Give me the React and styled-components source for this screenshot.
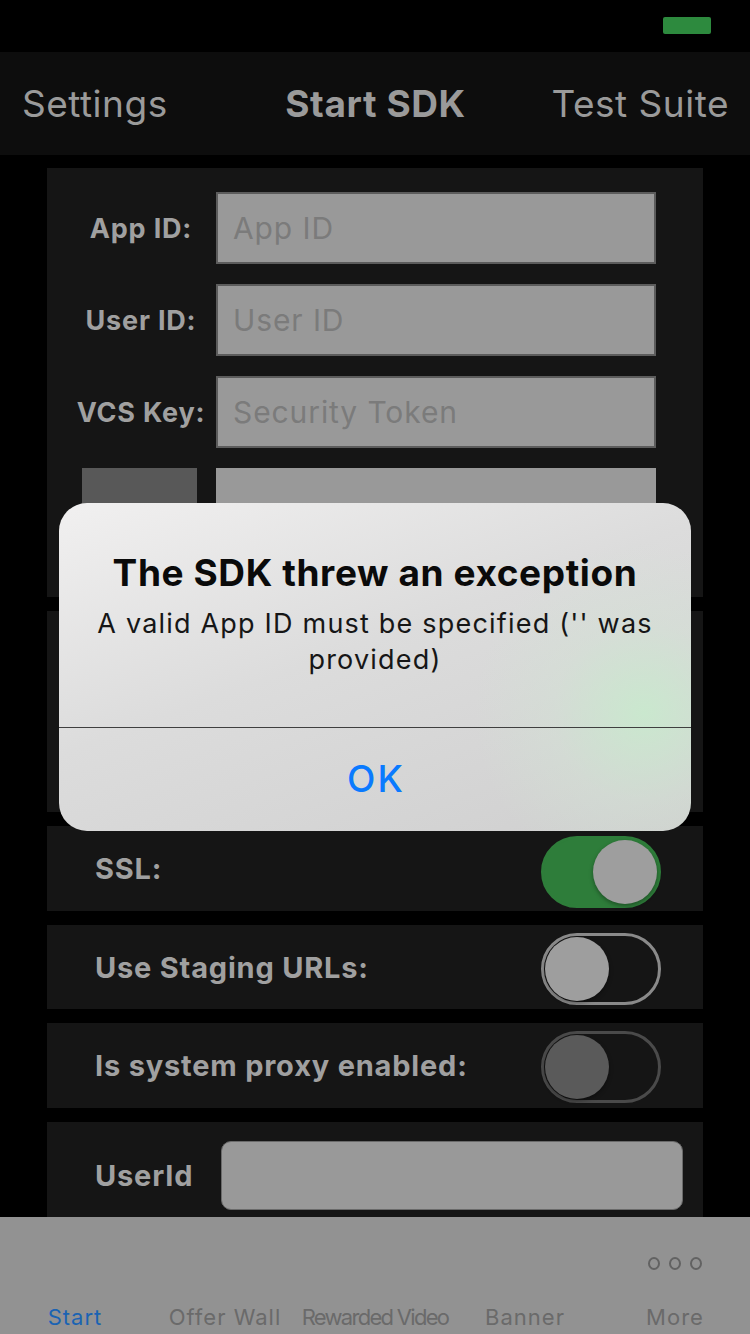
import React from "react";
import styled, { createGlobalStyle } from "styled-components";

const Global = createGlobalStyle`
  html, body { margin: 0; padding: 0; background: #000; }
  body { font-family: Inter, Roboto, "Noto Sans", sans-serif; }
  * { box-sizing: border-box; }
`;

const Page = styled.div`
  position: relative;
  width: 750px;
  height: 1334px;
  background: #000;
  display: flex;
  flex-direction: column;
  overflow: hidden;
`;

const StatusBar = styled.div`
  height: 52px;
  flex: none;
  display: flex;
  justify-content: flex-end;
  padding: 17px 39px 0 0;
`;

const Battery = styled.div`
  width: 48px;
  height: 17px;
  border-radius: 2px;
  background: #2d8a3e;
`;

const NavBar = styled.div`
  height: 103px;
  flex: none;
  background: #0d0d0d;
  display: grid;
  grid-template-columns: 1fr auto 1fr;
  align-items: center;
  padding: 0 21px 0 22px;
`;

const NavItem = styled.div`
  font-size: 37px;
  color: #9a9a9a;
  font-weight: ${(p) => (p.$bold ? 700 : 400)};
  letter-spacing: ${(p) => (p.$bold ? "0.6px" : "0.5px")};
  justify-self: ${(p) => p.$align || "center"};
`;

const Content = styled.div`
  flex: 1;
  min-height: 0;
  overflow: hidden;
  padding: 13px 47px 0;
  display: flex;
  flex-direction: column;
  gap: 14px;
`;

const Card = styled.div`
  flex: none;
  background: #151515;
  height: ${(p) => p.$h}px;
  padding: ${(p) => p.$pad || "0"};
  display: flex;
  flex-direction: ${(p) => (p.$col ? "column" : "row")};
  align-items: ${(p) => (p.$col ? "stretch" : p.$top ? "flex-start" : "center")};
  justify-content: ${(p) => (p.$col ? "flex-start" : "space-between")};
  gap: ${(p) => p.$gap || 0}px;
`;

const FieldRow = styled.div`
  display: flex;
  align-items: center;
  height: ${(p) => p.$h || 72}px;
  gap: 8px;
`;

const FieldLabel = styled.div`
  width: 140px;
  margin-left: 24px;
  margin-right: -3px;
  text-align: center;
  font-size: 27px;
  font-weight: 700;
  letter-spacing: 0.8px;
  color: #a0a0a0;
  white-space: nowrap;
`;

const TextBox = styled.div`
  width: 440px;
  height: 72px;
  background: #999;
  border: 2px solid #5c5c5c;
  display: flex;
  align-items: center;
  padding-left: 15px;
  font-size: 30px;
  letter-spacing: 0.9px;
  color: #7b7b7b;
`;

const DarkBlock = styled.div`
  width: 115px;
  height: 100%;
  margin-left: 35px;
  background: #585858;
`;

const LightBlock = styled.div`
  width: 440px;
  height: 100%;
  margin-left: 11px;
  background: #999;
`;

const RowLabel = styled.div`
  font-size: 29px;
  font-weight: 700;
  letter-spacing: 0.8px;
  color: #a0a0a0;
  padding-left: 48px;
  white-space: nowrap;
  line-height: ${(p) => p.$lh || "normal"};
`;

const Toggle = styled.div`
  position: relative;
  width: 120px;
  height: 72px;
  margin-right: 42px;
  margin-top: ${(p) => (p.$on ? 6 : 3)}px;
  border-radius: 36px;
  background: ${(p) => (p.$on ? "#2e7d3a" : "transparent")};
  border: 3px solid ${(p) => (p.$on ? "#2e7d3a" : p.$dim ? "#4a4a4a" : "#8a8a8a")};
`;

const Knob = styled.div`
  position: absolute;
  top: 1px;
  ${(p) => (p.$on ? "right: 1px;" : "left: 1px;")}
  width: 64px;
  height: 64px;
  border-radius: 50%;
  background: ${(p) => (p.$dim ? "#5a5a5a" : "#9e9e9e")};
  box-shadow: 0 2px 4px rgba(0, 0, 0, 0.35);
`;

const UserIdBox = styled.div`
  width: 462px;
  height: 69px;
  margin-right: 20px;
  border-radius: 10px;
  background: #999;
  border: 1px solid #6a6a6a;
`;

const TabBar = styled.div`
  height: 117px;
  flex: none;
  background: #929292;
  display: grid;
  grid-template-columns: repeat(5, 150px);
  align-items: end;
  padding-bottom: 4px;
`;

const Tab = styled.div`
  display: flex;
  flex-direction: column;
  align-items: center;
  gap: 34px;
`;

const TabLabel = styled.div`
  font-size: 22px;
  color: ${(p) => (p.$active ? "#1a63b3" : "#6a6a6a")};
  letter-spacing: ${(p) => (p.$tight ? "-1.7px" : "1px")};
  white-space: nowrap;
`;

const Dots = styled.div`
  display: flex;
  gap: 9px;
`;

const Dot = styled.div`
  width: 12px;
  height: 13px;
  border-radius: 50%;
  border: 2px solid #626262;
`;

const Overlay = styled.div`
  position: absolute;
  left: 59px;
  top: 503px;
  width: 632px;
  height: 328px;
  border-radius: 28px;
  overflow: hidden;
  background:
    radial-gradient(circle at 585px 210px, rgba(200, 235, 205, 0.85) 0, rgba(210, 228, 212, 0.4) 90px, rgba(210, 210, 210, 0) 170px),
    linear-gradient(160deg, #f1f0f0 0%, #dcdcdc 45%, #cfcfcf 100%);
  display: flex;
  flex-direction: column;
`;

const AlertBody = styled.div`
  height: 225px;
  padding-top: 48px;
  text-align: center;
  border-bottom: 1px solid #3f3f3f;
`;

const AlertTitle = styled.div`
  font-size: 37px;
  font-weight: 700;
  letter-spacing: 0.6px;
  color: #0a0a0a;
  line-height: 44px;
`;

const AlertMsg = styled.div`
  font-size: 27px;
  letter-spacing: 1.2px;
  color: #161616;
  line-height: 36px;
  margin-top: 11px;
  padding: 0 22px;
`;

const AlertButton = styled.div`
  flex: 1;
  display: flex;
  align-items: center;
  justify-content: center;
  font-size: 37px;
  font-weight: 500;
  letter-spacing: 2px;
  color: #0a7aff;
  padding: 0 0 2px 2px;
`;

export default function App() {
  return (
    <Page>
      <Global />
      <StatusBar>
        <Battery />
      </StatusBar>
      <NavBar>
        <NavItem $align="start">Settings</NavItem>
        <NavItem $bold>Start SDK</NavItem>
        <NavItem $align="end">Test Suite</NavItem>
      </NavBar>
      <Content>
        <Card $col $h={429} $pad="24px 0 0" $gap={20}>
          <FieldRow>
            <FieldLabel>App ID:</FieldLabel>
            <TextBox>App ID</TextBox>
          </FieldRow>
          <FieldRow>
            <FieldLabel>User ID:</FieldLabel>
            <TextBox>User ID</TextBox>
          </FieldRow>
          <FieldRow>
            <FieldLabel>VCS Key:</FieldLabel>
            <TextBox>Security Token</TextBox>
          </FieldRow>
          <FieldRow $h={120}>
            <DarkBlock />
            <LightBlock />
          </FieldRow>
        </Card>
        <Card $h={201} />
        <Card $h={85}>
          <RowLabel>SSL:</RowLabel>
          <Toggle $on>
            <Knob $on />
          </Toggle>
        </Card>
        <Card $h={84}>
          <RowLabel>Use Staging URLs:</RowLabel>
          <Toggle>
            <Knob />
          </Toggle>
        </Card>
        <Card $h={85}>
          <RowLabel>Is system proxy enabled:</RowLabel>
          <Toggle $dim>
            <Knob $dim />
          </Toggle>
        </Card>
        <Card $h={110} $pad="19px 0 0" $top>
          <RowLabel $lh="69px">UserId</RowLabel>
          <UserIdBox />
        </Card>
      </Content>
      <TabBar>
        <Tab>
          <TabLabel $active>Start</TabLabel>
        </Tab>
        <Tab>
          <TabLabel>Offer Wall</TabLabel>
        </Tab>
        <Tab>
          <TabLabel $tight>Rewarded Video</TabLabel>
        </Tab>
        <Tab>
          <TabLabel>Banner</TabLabel>
        </Tab>
        <Tab>
          <Dots>
            <Dot />
            <Dot />
            <Dot />
          </Dots>
          <TabLabel>More</TabLabel>
        </Tab>
      </TabBar>
      <Overlay>
        <AlertBody>
          <AlertTitle>The SDK threw an exception</AlertTitle>
          <AlertMsg>A valid App ID must be specified ('' was provided)</AlertMsg>
        </AlertBody>
        <AlertButton>OK</AlertButton>
      </Overlay>
    </Page>
  );
}
